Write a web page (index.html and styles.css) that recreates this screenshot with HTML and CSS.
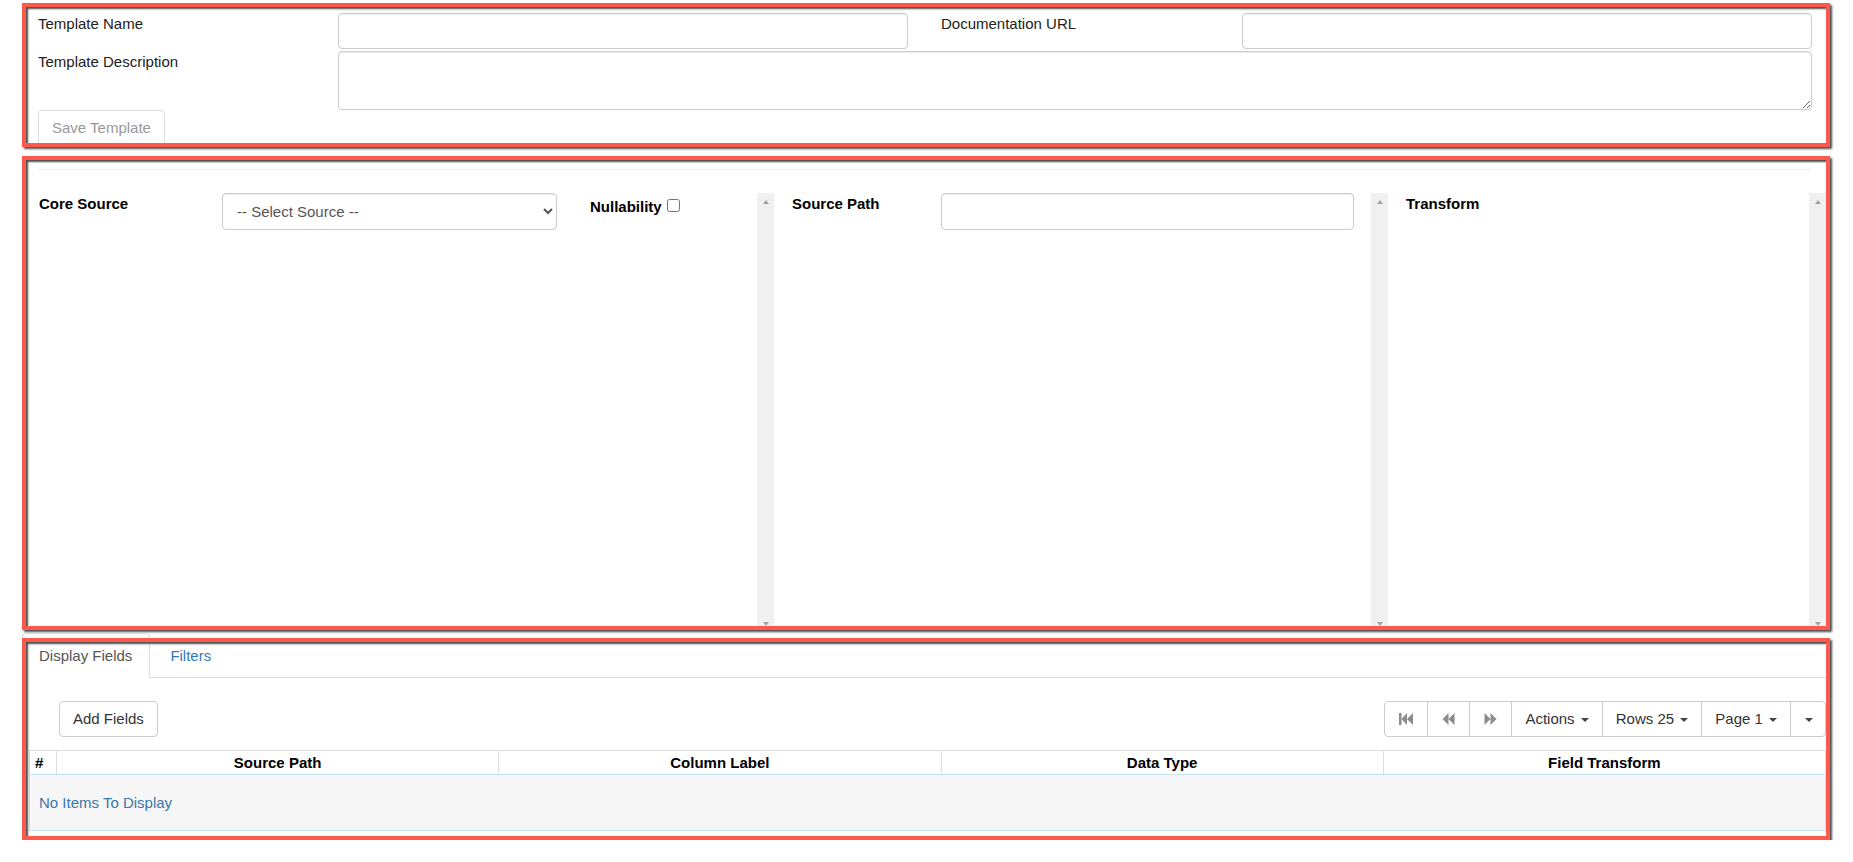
FILE: index.html
```html
<!DOCTYPE html>
<html lang="en">
<head>
<meta charset="utf-8">
<title>Template Editor</title>
<link rel="stylesheet" href="styles.css">
</head>
<body>
<div class="page">
  <section class="box box-template">
    <div class="tpl-grid">
      <label class="lbl">Template Name</label>
      <input class="ctl" type="text">
      <label class="lbl lbl-doc">Documentation URL</label>
      <input class="ctl" type="text">
      <label class="lbl">Template Description</label>
      <textarea class="ctl ta"></textarea>
    </div>
    <button class="btn btn-disabled" type="button">Save Template</button>
  </section>

  <section class="box box-mapping">
    <hr class="rule">
    <div class="panes">
      <div class="pane pane-core">
        <div class="pane-body core-row">
          <span class="blbl core-lbl">Core Source</span>
          <select class="ctl sel"><option>-- Select Source --</option></select>
          <span class="blbl null-lbl">Nullability<input class="chk" type="checkbox"></span>
        </div>
        <div class="vscroll"><span class="arr up"></span><span class="arr down"></span></div>
      </div>
      <div class="pane pane-path">
        <div class="pane-body path-row">
          <span class="blbl path-lbl">Source Path</span>
          <input class="ctl path-input" type="text">
        </div>
        <div class="vscroll"><span class="arr up"></span><span class="arr down"></span></div>
      </div>
      <div class="pane pane-xf">
        <div class="pane-body xf-row">
          <span class="blbl">Transform</span>
        </div>
        <div class="vscroll"><span class="arr up"></span><span class="arr down"></span></div>
      </div>
    </div>
  </section>

  <section class="box box-fields">
    <ul class="tabs">
      <li class="tab active">Display Fields</li>
      <li class="tab">Filters</li>
    </ul>
    <div class="toolbar">
      <button class="btn" type="button">Add Fields</button>
      <div class="btn-group">
        <button class="btn icon-btn" type="button"><svg width="14" height="12" viewBox="0 0 14 12"><rect x="0" y="0" width="2.5" height="12"/><path d="M8 0 L2.5 6 L8 12 Z M14 0 L8 6 L14 12 Z"/></svg></button>
        <button class="btn icon-btn" type="button"><svg width="13" height="12" viewBox="0 0 13 12"><path d="M6.5 0 L0.5 6 L6.5 12 Z M12.5 0 L6.5 6 L12.5 12 Z"/></svg></button>
        <button class="btn icon-btn" type="button"><svg width="13" height="12" viewBox="0 0 13 12"><path d="M0.5 0 L6.5 6 L0.5 12 Z M6.5 0 L12.5 6 L6.5 12 Z"/></svg></button>
        <button class="btn" type="button">Actions <span class="caret"></span></button>
        <button class="btn" type="button">Rows 25 <span class="caret"></span></button>
        <button class="btn" type="button">Page 1 <span class="caret"></span></button>
        <button class="btn caret-btn" type="button"><span class="caret"></span></button>
      </div>
    </div>
    <table class="grid">
      <colgroup>
        <col class="c-num"><col><col><col><col>
      </colgroup>
      <thead>
        <tr><th class="th-num">#</th><th>Source Path</th><th>Column Label</th><th>Data Type</th><th>Field Transform</th></tr>
      </thead>
      <tbody>
        <tr><td class="empty" colspan="5">No Items To Display</td></tr>
      </tbody>
    </table>
  </section>
</div>
</body>
</html>
```

FILE: styles.css
```css
* { box-sizing: border-box; }
html, body { margin: 0; background: #fff; }
body {
  font-family: "Liberation Sans", Arial, sans-serif;
  font-size: 15px;
  line-height: 21px;
  color: #333;
}

.page { padding: 3px 0 0 22px; width: 1830px; }

.box { position: relative; width: 1808px; }
.box::after {
  content: "";
  position: absolute;
  left: 0; right: 0; top: 0; bottom: 0;
  border: 4px solid #fb5a4c;
  box-shadow: 2px 2px 2px rgba(0,0,0,.7), inset 2px 2px 2px rgba(0,0,0,.7);
  pointer-events: none;
}

/* ---------- controls ---------- */
.ctl {
  display: block;
  width: 100%;
  height: 100%;
  margin: 0;
  padding: 6px 12px;
  border: 1px solid #ccc;
  border-radius: 4px;
  background: #fff;
  box-shadow: inset 0 1px 1px rgba(0,0,0,.075);
  font: inherit;
  color: #555;
}
.btn {
  display: inline-block;
  height: 36px;
  margin: 0;
  padding: 6px 13px;
  border: 1px solid #ccc;
  border-radius: 4px;
  background: #fff;
  font: inherit;
  line-height: 22px;
  color: #333;
  white-space: nowrap;
}
.btn-disabled { color: #999; border-color: #ddd; }

/* ---------- template box ---------- */
.box-template { height: 144px; padding: 10px 18px 0 16px; margin-bottom: 9px; }
.tpl-grid {
  display: grid;
  grid-template-columns: 300px 570px 334px 570px;
  grid-template-rows: 36px 59px;
  row-gap: 2px;
}
.lbl { color: #222; line-height: 21px; }
.lbl-doc { padding-left: 33px; }
.ta { grid-column: 2 / 5; resize: vertical; }

/* ---------- mapping box ---------- */
.box-mapping { height: 474px; padding-top: 13px; margin-bottom: 3px; }
.rule { margin: 0 19px 0 16px; border: 0; border-top: 1px solid #eee; height: 0; }
.panes { display: flex; margin: 23px 4px 0 4px; height: 437px; }
.pane { display: flex; }
.pane-core { width: 748px; }
.pane-path { width: 614px; }
.pane-xf { width: 438px; }
.pane-body { flex: 1; display: flex; align-items: flex-start; }
.blbl { font-weight: bold; color: #000; }
.core-row { padding-left: 13px; }
.core-lbl { width: 183px; flex: none; }
.sel { width: 335px; height: 37px; flex: none; padding: 6px 10px; }
.null-lbl { margin-left: 33px; padding-top: 3px; }
.chk { margin: 3px 0 0 5px; width: 13px; height: 13px; vertical-align: top; }
.path-row { padding-left: 18px; }
.path-lbl { width: 149px; flex: none; }
.path-input { width: 413px; height: 37px; flex: none; }
.xf-row { padding-left: 18px; }

.vscroll {
  width: 17px;
  flex: none;
  background: #f0f0f0;
  display: flex;
  flex-direction: column;
  justify-content: space-between;
  align-items: center;
  padding: 7px 0 4px;
}
.arr { width: 0; height: 0; border-left: 3.5px solid transparent; border-right: 3.5px solid transparent; }
.arr.up { border-bottom: 4px solid #a3a3a3; }
.arr.down { border-top: 4px solid #a3a3a3; }

/* ---------- fields box ---------- */
.box-fields { height: 207px; }
.box-fields::after { top: 5px; }
.tabs {
  list-style: none;
  margin: 0 4px 0 0;
  padding: 0;
  display: flex;
  border-bottom: 1px solid #ddd;
}
.tab {
  margin: 0 3px -1px 0;
  padding: 11px 17px 10px 16px;
  border: 1px solid transparent;
  border-radius: 4px 4px 0 0;
  line-height: 22px;
  color: #337ab7;
}
.tab.active { color: #555; background: #fff; border-color: #ddd; border-bottom-color: #fff; }

.toolbar {
  display: flex;
  justify-content: space-between;
  margin: 23px 4px 0 37px;
}
.btn-group { display: flex; }
.btn-group .btn { border-radius: 0; margin-left: -1px; }
.btn-group .btn:first-child { border-radius: 4px 0 0 4px; margin-left: 0; }
.btn-group .btn:last-child { border-radius: 0 4px 4px 0; }
.icon-btn { padding: 6px 14px; display: flex; align-items: center; }
.icon-btn svg { fill: #8c8c8c; display: block; }
.caret-btn { padding: 6px 12px; }
.caret {
  display: inline-block;
  width: 0; height: 0;
  margin-left: 2px;
  vertical-align: middle;
  border-top: 4px solid #444;
  border-left: 4px solid transparent;
  border-right: 4px solid transparent;
}

.grid {
  margin: 13px 4px 0 7px;
  width: 1797px;
  border-collapse: collapse;
  table-layout: fixed;
}
.c-num { width: 27px; }
.grid th {
  padding: 1px 5px;
  line-height: 21px;
  font-weight: bold;
  color: #000;
  text-align: center;
  border: 1px solid #ddd;
  border-bottom: 1px solid #c6e4ea;
}
.grid th.th-num { text-align: left; }
.grid td.empty {
  padding: 17px 9px;
  line-height: 21px;
  background: #f6f6f6;
  color: #3a77ab;
  border-left: 1px solid #ddd;
  border-right: 1px solid #ddd;
  border-bottom: 1px solid #c6e4ea;
}
```
